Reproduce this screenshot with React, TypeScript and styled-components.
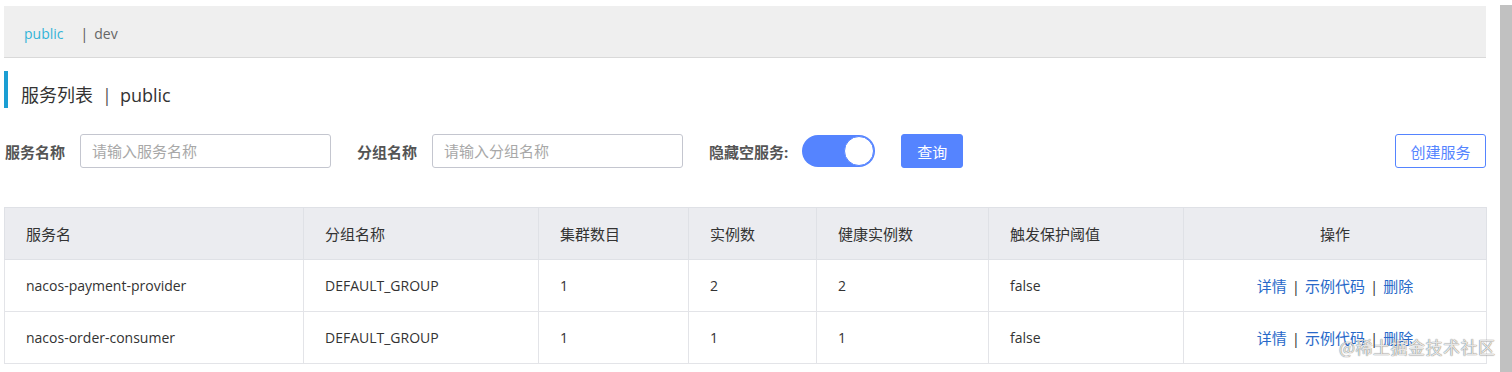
import React from "react";
import styled, { createGlobalStyle } from "styled-components";

const Global = createGlobalStyle`
  html, body { margin: 0; padding: 0; background: #fff; }
  body { font-family: "Open Sans", "Noto Sans CJK SC", sans-serif; color: #333; overflow: hidden; }
  * { box-sizing: border-box; }
`;

const Page = styled.div`
  position: relative;
  display: flex;
  align-items: flex-start;
  width: 1512px;
  height: 372px;
  padding-left: 4px;
`;

const Main = styled.div`
  width: 1482px;
  display: flex;
  flex-direction: column;
`;

const ScrollTrack = styled.div`
  margin-left: 14px;
  margin-top: 5px;
  width: 12px;
  height: 367px;
  background: #c1c1c1;
`;

const NamespaceBar = styled.div`
  margin-top: 6px;
  height: 52px;
  background: #efefef;
  border-bottom: 1px solid #d9d9d9;
  display: flex;
  align-items: center;
  padding: 4px 0 0 20px;
  font-size: 14px;
`;

const NsItem = styled.span<{ $active?: boolean }>`
  color: ${(p) => (p.$active ? "#33b4d8" : "#666")};
  margin-right: ${(p) => (p.$active ? "17px" : "0")};
`;

const NsSep = styled.span`
  color: #555;
  margin-right: 6px;
`;

const Title = styled.div`
  margin-top: 13px;
  height: 37px;
  border-left: 4px solid #1b9ed3;
  padding: 0 0 3px 13px;
  display: flex;
  align-items: flex-end;
  font-size: 18px;
  line-height: 20px;
  color: #333;
`;

const TitleSep = styled.span`
  margin: 0 8px 0 9px;
  color: #555;
`;

const FilterBar = styled.div`
  margin-top: 26px;
  height: 34px;
  display: flex;
  align-items: center;
  gap: 26px;
  padding-left: 1px;
`;

const Field = styled.div<{ $gap: number }>`
  display: flex;
  align-items: center;
  gap: ${(p) => p.$gap}px;
`;

const Label = styled.span`
  font-size: 15px;
  font-weight: 700;
  color: #555;
  white-space: nowrap;
`;

const Input = styled.input`
  width: 251px;
  height: 34px;
  border: 1px solid #c4c6cf;
  border-radius: 3px;
  padding: 0 11px;
  font-family: inherit;
  font-size: 15px;
  color: #333;
  outline: none;
  &::placeholder { color: #a8a8a8; }
`;

const Switch = styled.div`
  width: 73px;
  height: 32px;
  border-radius: 16px;
  background: #5584ff;
  display: flex;
  align-items: center;
  justify-content: flex-end;
  padding: 1px;
`;

const Knob = styled.div`
  width: 30px;
  height: 30px;
  border-radius: 50%;
  background: #fff;
  border: 1px solid #5584ff;
`;

const Button = styled.button<{ $primary?: boolean }>`
  height: 34px;
  padding: 0 15px;
  border-radius: 3px;
  border: 1px solid #5584ff;
  background: ${(p) => (p.$primary ? "#5584ff" : "#fff")};
  color: ${(p) => (p.$primary ? "#fff" : "#5584ff")};
  font-family: inherit;
  font-size: 15px;
  cursor: pointer;
`;

const CreateButton = styled(Button)`
  margin-left: auto;
  width: 91px;
  padding: 0;
`;

const Table = styled.table`
  margin-top: 39px;
  width: 1482px;
  border-collapse: collapse;
  table-layout: fixed;
  border: 1px solid #dcdee3;
  font-size: 14px;
`;

const Th = styled.th<{ $center?: boolean }>`
  height: 52px;
  background: #ebecf0;
  font-weight: 400;
  font-size: 15px;
  color: #333;
  text-align: ${(p) => (p.$center ? "center" : "left")};
  padding: 0 21px;
  border: 1px solid #dfe1e6;
`;

const Td = styled.td<{ $center?: boolean }>`
  height: 52px;
  color: #333;
  text-align: ${(p) => (p.$center ? "center" : "left")};
  padding: 0 21px;
  border: 1px solid #e3e4e8;
`;

const Ops = styled.span`
  font-size: 15px;
`;

const Link = styled.a`
  color: #2869c9;
  text-decoration: none;
  cursor: pointer;
`;

const OpSep = styled.span`
  color: #333;
  margin: 0 5px;
`;

const Watermark = styled.div`
  position: absolute;
  left: 1339px;
  top: 334px;
  font-family: "Noto Sans CJK SC", sans-serif;
  font-size: 17px;
  color: rgba(255, 255, 255, 0.85);
  text-shadow: 0 0 1px rgba(0, 0, 0, 0.55), 0 0 1px rgba(0, 0, 0, 0.35);
  letter-spacing: 0.5px;
  pointer-events: none;
`;

const widths = [299, 235, 150, 128, 172, 195, 303];
const headers = ["服务名", "分组名称", "集群数目", "实例数", "健康实例数", "触发保护阈值", "操作"];
const rows = [
  ["nacos-payment-provider", "DEFAULT_GROUP", "1", "2", "2", "false"],
  ["nacos-order-consumer", "DEFAULT_GROUP", "1", "1", "1", "false"],
];

export default function App() {
  return (
    <>
      <Global />
      <Page>
        <Main>
          <NamespaceBar>
            <NsItem $active>public</NsItem>
            <NsSep>|</NsSep>
            <NsItem>dev</NsItem>
          </NamespaceBar>
          <Title>
            服务列表<TitleSep>|</TitleSep>public
          </Title>
          <FilterBar>
            <Field $gap={15}>
              <Label>服务名称</Label>
              <Input placeholder="请输入服务名称" />
            </Field>
            <Field $gap={15}>
              <Label>分组名称</Label>
              <Input placeholder="请输入分组名称" />
            </Field>
            <Field $gap={14}>
              <Label>隐藏空服务:</Label>
              <Switch>
                <Knob />
              </Switch>
            </Field>
            <Button $primary>查询</Button>
            <CreateButton>创建服务</CreateButton>
          </FilterBar>
          <Table>
            <colgroup>
              {widths.map((w, i) => (
                <col key={i} style={{ width: w }} />
              ))}
            </colgroup>
            <thead>
              <tr>
                {headers.map((h, i) => (
                  <Th key={h} $center={i === headers.length - 1}>
                    {h}
                  </Th>
                ))}
              </tr>
            </thead>
            <tbody>
              {rows.map((r) => (
                <tr key={r[0]}>
                  {r.map((c, i) => (
                    <Td key={i}>{c}</Td>
                  ))}
                  <Td $center>
                    <Ops>
                      <Link>详情</Link>
                      <OpSep>|</OpSep>
                      <Link>示例代码</Link>
                      <OpSep>|</OpSep>
                      <Link>删除</Link>
                    </Ops>
                  </Td>
                </tr>
              ))}
            </tbody>
          </Table>
        </Main>
        <ScrollTrack />
        <Watermark>@稀土掘金技术社区</Watermark>
      </Page>
    </>
  );
}
